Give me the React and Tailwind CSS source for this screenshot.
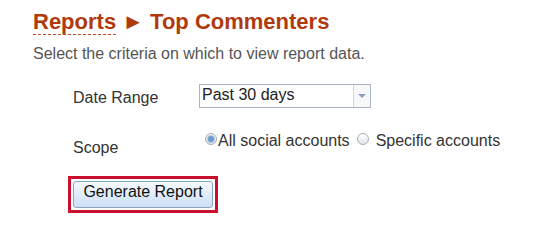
import React, { useState } from "react";

function Radio({ checked, onClick }) {
  return (
    <span
      onClick={onClick}
      className="mt-[1px] flex h-[12px] w-[12px] shrink-0 cursor-pointer items-center justify-center rounded-full border border-[#a7adb5] bg-linear-to-b from-[#ffffff] to-[#e0e4e9]"
    >
      {checked && <span className="h-[6px] w-[6px] rounded-full bg-[#6f9ccb] shadow-[0_0_0_1px_#b3cbe3]" />}
    </span>
  );
}

export default function App() {
  const [scope, setScope] = useState("all");
  const [range, setRange] = useState("Past 30 days");

  return (
    <div className="h-[240px] w-[558px] bg-white pl-[33px] pt-[10px] font-['Liberation_Sans',Arial,sans-serif]">
      {/* header */}
      <h1 className="text-[22px] font-bold leading-[24px] text-[#b03a0c]">
        <span className="border-b border-dashed border-[#c4521e]">Reports</span> ► Top Commenters
      </h1>
      <p className="mt-[11px] text-[16px] leading-[18px] text-[#555]">
        Select the criteria on which to view report data.
      </p>

      {/* form */}
      <div className="mt-[21px] pl-[40px] text-[16px] leading-[18px] text-[#333]">
        <div className="flex items-start">
          <div className="w-[126px] pt-[5px]">Date Range</div>
          <div className="flex h-[24px] w-[172px] border border-[#aab3c4] bg-white">
            <div className="flex-1 pl-[2px] leading-[20px] text-[#222]">{range}</div>
            <div
              onClick={() => setRange("Past 30 days")}
              className="flex w-[17px] items-center justify-center border-l border-[#d3d8e0] bg-[#f7f8fa]"
            >
              <span className="h-0 w-0 border-x-[4px] border-t-[4px] border-x-transparent border-t-[#8aa2c2]" />
            </div>
          </div>
        </div>

        <div className="mt-[24px] flex items-start">
          <div className="w-[126px] pt-[7px]">Scope</div>
          <div className="ml-[6px] flex items-start">
            <Radio checked={scope === "all"} onClick={() => setScope("all")} />
            <span className="ml-[1px]">All social accounts</span>
            <span className="ml-[7px]">
              <Radio checked={scope === "specific"} onClick={() => setScope("specific")} />
            </span>
            <span className="ml-[7px]">Specific accounts</span>
          </div>
        </div>

        <div className="-ml-[5px] mt-[19px] inline-block border-[3px] border-[#c8102e] p-[2px]">
          <button className="block h-[27px] w-[140px] rounded-[3px] border border-[#8ea6c4] bg-linear-to-b from-[#f6faff] to-[#cbe0f5] pb-[6px] text-[16px] leading-[18px] text-[#111]">
            Generate Report
          </button>
        </div>
      </div>
    </div>
  );
}
